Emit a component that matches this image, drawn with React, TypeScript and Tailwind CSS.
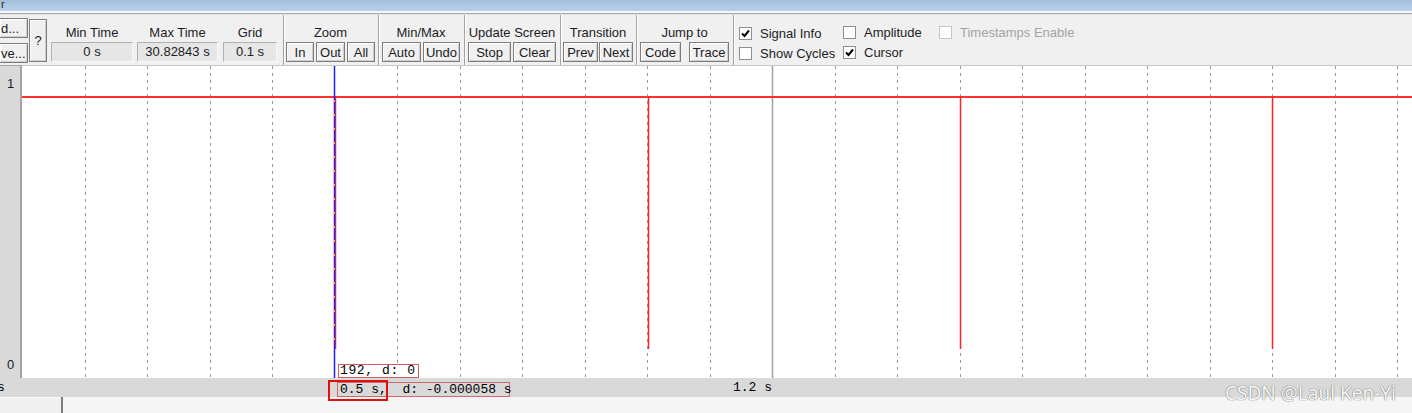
import { FC, ReactNode } from "react";

const GRID = Array.from({ length: 22 }, (_, i) => i + 1);
const PULSES = [313.5, 626.5, 938.5, 1250.5];

const Btn: FC<{ className?: string; children: ReactNode }> = ({ className = "", children }) => (
	<div
		className={`flex items-center justify-center h-[20px] border border-[#7c7c7c] bg-[#f0f0f0] shadow-[inset_1px_1px_0_#ffffff,inset_-1px_-1px_0_#cfcfcf] leading-none ${className}`}>
		{children}
	</div>
);

const Sep: FC<{ className?: string }> = ({ className = "" }) => (
	<div className={`w-[2px] h-full border-l border-[#a3a3a3] border-r border-r-white ${className}`} />
);

const Field: FC<{ label: string; value: string; className?: string }> = ({ label, value, className = "" }) => (
	<div className={`flex flex-col items-center pt-[10px] ${className}`}>
		<div className="h-[15px] leading-[15px]">{label}</div>
		<div className="mt-[2px] w-full h-[20px] flex items-center justify-center bg-[#e6e6e6] border border-[#b0b0b0] border-b-[#f8f8f8] border-r-[#f8f8f8]">
			{value}
		</div>
	</div>
);

const Group: FC<{ label: string; className?: string; children: ReactNode }> = ({ label, className = "", children }) => (
	<div className={`flex flex-col items-center pt-[10px] ${className}`}>
		<div className="h-[15px] leading-[15px] whitespace-nowrap">{label}</div>
		<div className="mt-[2px] flex">{children}</div>
	</div>
);

const Check: FC<{ label: string; checked?: boolean; disabled?: boolean }> = ({ label, checked, disabled }) => (
	<div className={`flex items-center h-[13px] whitespace-nowrap ${disabled ? "text-[#a3a3a3]" : ""}`}>
		<div className={`w-[13px] h-[13px] bg-white border ${disabled ? "border-[#c4c4c4]" : "border-[#8e8e8e]"} flex items-center justify-center`}>
			{checked && (
				<svg width="9" height="9" viewBox="0 0 9 9">
					<path d="M1 4.5 L3.5 7 L8 1.5" stroke="#000" strokeWidth="2" fill="none" />
				</svg>
			)}
		</div>
		<span className="ml-[8px]">{label}</span>
	</div>
);

const Toolbar: FC = () => (
	<div className="flex items-start h-[50px] bg-[#f0f0f0]">
		<div className="flex flex-col gap-[5px] pt-[3px] w-[28px]">
			<Btn className="w-[28px] !justify-start pl-[1px] border-l-0">d...</Btn>
			<Btn className="w-[28px] !justify-start pl-[1px] border-l-0">ve...</Btn>
		</div>
		<Btn className="ml-[1px] mt-[4px] w-[18px] !h-[43px]">?</Btn>
		<Field label="Min Time" value="0 s" className="ml-[4px] w-[82px]" />
		<Field label="Max Time" value="30.82843 s" className="ml-[4px] w-[81px]" />
		<Field label="Grid" value="0.1 s" className="ml-[5px] w-[54px]" />
		<Sep className="ml-[6px]" />
		<Group label="Zoom" className="ml-[1px]">
			<Btn className="w-[28px]">In</Btn>
			<Btn className="w-[29px] ml-[2px]">Out</Btn>
			<Btn className="w-[28px] ml-[2px]">All</Btn>
		</Group>
		<Sep className="ml-[3px]" />
		<Group label="Min/Max" className="ml-[2px]">
			<Btn className="w-[39px]">Auto</Btn>
			<Btn className="w-[37px] ml-[2px]">Undo</Btn>
		</Group>
		<Sep className="ml-[4px]" />
		<Group label="Update Screen" className="ml-[2px]">
			<Btn className="w-[43px]">Stop</Btn>
			<Btn className="w-[43px] ml-[2px]">Clear</Btn>
		</Group>
		<Sep className="ml-[4px]" />
		<Group label="Transition" className="ml-[1px]">
			<Btn className="w-[35px]">Prev</Btn>
			<Btn className="w-[34px] ml-[1px]">Next</Btn>
		</Group>
		<Sep className="ml-[3px]" />
		<Group label="Jump to" className="ml-[2px]">
			<Btn className="w-[41px]">Code</Btn>
			<Btn className="w-[40px] ml-[8px]">Trace</Btn>
		</Group>
		<Sep className="ml-[4px]" />
		<div className="ml-[4px] w-[104px] flex flex-col gap-[7px] pt-[12px]">
			<Check label="Signal Info" checked />
			<Check label="Show Cycles" />
		</div>
		<div className="w-[96px] flex flex-col gap-[7px] pt-[11px]">
			<Check label="Amplitude" />
			<Check label="Cursor" checked />
		</div>
		<div className="flex flex-col pt-[11px]">
			<Check label="Timestamps Enable" disabled />
		</div>
	</div>
);

const Plot: FC = () => (
	<div className="relative flex-1 bg-white border-t border-[#c8c8c8]">
		<svg width="1390" height="313" className="block">
			{GRID.filter((k) => k !== 5 && k !== 12).map((k) => {
				const x = Math.round(62.5 * k) + 0.5;
				return <line key={k} x1={x} y1={0} x2={x} y2={313} stroke="#999999" strokeDasharray="3 4" />;
			})}
			<line x1={750.5} y1={0} x2={750.5} y2={313} stroke="#a2a2a2" strokeWidth="1.5" />
			<line x1={0} y1={31} x2={1390} y2={31} stroke="#ff3030" strokeWidth="2" />
			{PULSES.map((x) => (
				<line key={x} x1={x} y1={31} x2={x} y2={283} stroke="#ff2020" strokeWidth="1.5" />
			))}
			<line x1={312.5} y1={0} x2={312.5} y2={313} stroke="#2020ff" strokeWidth="1.5" />
			<line x1={312.5} y1={34} x2={312.5} y2={283} stroke="#f0a030" strokeWidth="1" strokeDasharray="2 12" />
		</svg>
		<div className="absolute left-[316px] top-[298px] w-[81px] h-[14px] border border-[#d06060] bg-white font-['Liberation_Mono',monospace] text-[13px] leading-[12px] pl-[1px] tracking-[0.6px] whitespace-pre text-black">
			192, d: 0
		</div>
	</div>
);

export default function App() {
	return (
		<div className="relative w-[1412px] h-[413px] overflow-hidden flex flex-col bg-[#f0f0f0] font-['Liberation_Sans',Arial,sans-serif] text-[13px] text-[#1c1c24]">
			<div className="h-[11px] bg-linear-to-b from-[#a3bedb] to-[#b8d0ea] text-[11px] leading-[8px] pl-[1px] overflow-hidden text-[#222]">
				r
			</div>
			<div className="h-[2px] bg-[#f4f7fb]" />
			<div className="h-[1px] bg-[#a8a8a8]" />
			<div className="h-[1px] bg-[#e4e4e4]" />
			<Toolbar />
			<div className="flex h-[313px]">
				<div className="w-[22px] bg-[#d9d9d9] border-t border-r-2 border-[#a4a4a4] flex flex-col items-center justify-between pt-[8px] pb-[4px] pl-[1px]">
					<span>1</span>
					<span>0</span>
				</div>
				<Plot />
			</div>
			<div className="relative h-[19px] bg-[#d9d9d9] font-['Liberation_Mono',monospace] text-[13px] text-black">
				<span className="absolute left-[-3px] top-[2px] leading-[15px]">s</span>
				<div className="absolute left-[337px] top-[4px] w-[173px] h-[15px] border border-[#d06868] leading-[13px] pl-[2px] whitespace-pre">
					0.5 s,  d: -0.000058 s
				</div>
				<div className="absolute left-[328px] top-[2px] w-[60px] h-[21px] border-2 border-[#e01010]" />
				<span className="absolute left-[733px] top-[2px] leading-[15px]">1.2 s</span>
			</div>
			<div className="flex h-[16px]">
				<div className="w-[61px] bg-[#f0f0f0] border-t border-[#fafafa]" />
				<div className="w-[2px] bg-[#7a7a7a]" />
				<div className="flex-1 bg-[#f5f5f5]" />
			</div>
			<div className="absolute left-[1225px] top-[380px] font-['Noto_Sans',sans-serif] text-[19px] leading-[26px] text-[#fbfbfb] [text-shadow:0_0_1px_#6a6a6a,0_0_1px_#6a6a6a]">
				CSDN @Laul Ken-Yi
			</div>
		</div>
	);
}
